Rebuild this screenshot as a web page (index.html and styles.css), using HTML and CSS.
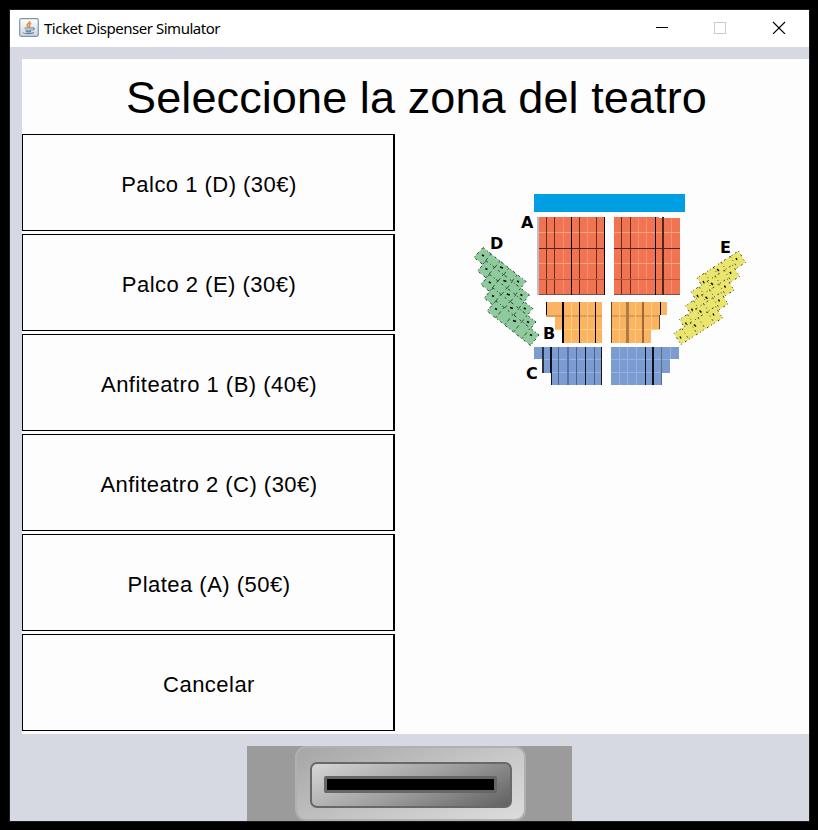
FILE: index.html
```
<!DOCTYPE html>
<html lang="es">
<head>
<meta charset="utf-8">
<title>Ticket Dispenser Simulator</title>
<link rel="stylesheet" href="styles.css">
</head>
<body>
<div class="window">
  <header class="titlebar">
    <svg class="app-icon" width="20" height="19" viewBox="0 0 20 19">
      <defs><linearGradient id="tile" x1="0" y1="0" x2="0" y2="1"><stop offset="0" stop-color="#fff"/><stop offset="1" stop-color="#cfd5db"/></linearGradient></defs>
      <rect x=".7" y=".7" width="18.6" height="17.6" rx="1.5" fill="url(#tile)" stroke="#7c95ac" stroke-width="1.2"/>
      <path d="M10.6 3c1 2-3 2.700-2.500 4.500.2.900 1 1.200 1.200 2M12.300 5.300c-1.700.8-2.700 1.700-1.600 2.800.5.600 0 1.100-.4 1.500" fill="none" stroke="#ec8a3a" stroke-width="1.500"/>
      <path d="M5.500 10h8M6.300 11.700c2 .7 4.500.7 6.500 0M6.800 13.400c1.600.6 3.600.6 5.300 0M13.500 10c2-.8 2.500 1.300-.2 2.300M4 14.500c1 1.500 9 1.500 11 0" fill="none" stroke="#6488a6" stroke-width="1.200"/>
    </svg>
    <span class="title">Ticket Dispenser Simulator</span>
    <svg class="controls" width="130" height="14" viewBox="0 0 130 14" shape-rendering="crispEdges">
      <path d="M0 7.500h12" stroke="#000"/>
      <rect x="58.500" y="2.500" width="11" height="11" fill="none" stroke="#ccc"/>
      <path d="M117 2l12 12M129 2L117 14" stroke="#000" stroke-width="1.100" shape-rendering="auto"/>
    </svg>
  </header>
  <main class="screen">
    <h1>Seleccione la zona del teatro</h1>
    <div class="content">
      <div class="options">
        <button>Palco 1 (D) (30€)</button>
        <button>Palco 2 (E) (30€)</button>
        <button>Anfiteatro 1 (B) (40€)</button>
        <button>Anfiteatro 2 (C) (30€)</button>
        <button>Platea (A) (50€)</button>
        <button>Cancelar</button>
      </div>
      <svg class="map" width="280" height="200" viewBox="470 190 280 200">
        <defs>
          <g id="row-d">
            <path d="M483 247.500L526 281.500 517.500 292 474 257.500z" fill="#8fca9c"/>
            <path d="M483 247.500L526 281.500 517.500 292 474 257.500z" fill="none" stroke="#1c3022" stroke-width=".9" stroke-dasharray="2 3 1 2 3 4"/>
            <path d="M491 254l-8 10M500 261l-8 10M509 268l-8 10M517 275l-8 10" stroke="#264a30" stroke-width=".9" stroke-dasharray="2 3 4 2"/>
            <path d="M482 255l2 1M500 267l3 1M517 281l2 1" stroke="#000" stroke-width="1.500"/>
          </g>
          <g id="row-e">
            <path d="M738.500 251L745.500 262.500 704 289 697 278z" fill="#e9e56f"/>
            <path d="M738.500 251L745.500 262.500 704 289 697 278z" fill="none" stroke="#353318" stroke-width=".9" stroke-dasharray="1 3 2 4 1 2"/>
            <path d="M730 256l7 11M721 262l7 11M713 267l7 11M705 273l7 11" stroke="#4c481d" stroke-width=".9" stroke-dasharray="2 3 1 3"/>
            <path d="M736 258l1 2M717 269l2 2M703 281l1 2" stroke="#15150b" stroke-width="1.500"/>
          </g>
        </defs>
        <g shape-rendering="crispEdges">
          <path d="M534 194h151v18H534z" fill="#009fe3"/>
          <path d="M537 217h2v78h-2z" fill="#bdbdc7"/>
          <path d="M539 217h66v78h-66zM614 217h24l42 1v77h-66z" fill="#f07352"/>
          <g stroke="#f8a184">
            <path d="M563.500 217v78M587.500 217v78M646.500 218v77M671.500 218v77M638.500 218v77" opacity=".6"/>
            <path d="M539 232.500h66M539 263.500h66M614 232.500h66M614 263.500h66"/>
          </g>
          <path d="M546.500 217v78M554.500 217v78M579.500 217v78M596.500 217v78M621.500 217v78M630.500 217v78" stroke="#652d20"/>
          <path d="M539 248.500h66M614 248.500h66" stroke="#5c2018"/>
          <path d="M539 279.500h66M614 279.500h66" stroke="#b85640"/>
          <path d="M539 294.500h66M614 294.500h66" stroke="#765650"/>
          <path d="M571.500 217v78M604.500 217v78M655.500 217v78" stroke="#000"/>
          <path d="M663 217v78" stroke="#4f281d" stroke-width="2"/>

          <path d="M546 302h56v41h-40v-14h-7v-13h-9zM611 302h56v13h-7v14h-9v14h-40z" fill="#fab462"/>
          <path d="M546 316h56M611 316h49" stroke="#d99d57" stroke-width="2"/>
          <path d="M571.500 302v41M587.500 302v41M619.500 302v41M635.500 302v41M651.500 302v27M555 329.500h47M611 329.500h49" stroke="#ffce78"/>
          <path d="M563 302v41" stroke="#000" stroke-width="2"/>
          <path d="M546.500 302v13M579.500 302v41M595.500 302v41M660.500 302v13" stroke="#000"/>
          <path d="M611.500 302v41M659.500 315v14" stroke="#654722"/>
          <path d="M627.500 302v41" stroke="#ad7d45" stroke-width="3"/>
          <path d="M643 302v41" stroke="#9c6938" stroke-width="2"/>

          <path d="M534 347h68v38h-51v-12h-9v-14h-8zM611 347h68v12h-9v14h-8v12h-51z" fill="#7b9bd1"/>
          <path d="M542 359.500h60M611 359.500h59M551 372.500h51M611 372.500h51M619.500 347v38M627.500 347v38M636.500 347v38M670.500 347v12" stroke="#91b3e6"/>
          <path d="M558.500 347v38M576.500 347v38M594.500 347v38" stroke="#4d618a"/>
          <path d="M568 347v38" stroke="#5a71a5" stroke-width="2"/>
          <path d="M543 347v26" stroke="#293044" stroke-width="2"/>
          <path d="M551 347v26M653 347v38" stroke="#10131e" stroke-width="2"/>
          <path d="M551.500 372v13M585.500 347v38M601.500 347v38M645.500 347v38" stroke="#111622"/>
          <path d="M661.500 347v38" stroke="#65677a"/>
        </g>
        <use href="#row-d"/><use href="#row-d" x="3.400" y="13.500"/><use href="#row-d" x="6.800" y="27"/><use href="#row-d" x="10" y="40.500"/><use href="#row-d" x="13" y="53.500"/>
        <use href="#row-e"/><use href="#row-e" x="-6" y="13.900"/><use href="#row-e" x="-11.500" y="27.700"/><use href="#row-e" x="-17.500" y="41.500"/><use href="#row-e" x="-23" y="55.500"/>
        <g class="labels">
          <text x="521" y="228">A</text>
          <text x="490" y="249">D</text>
          <text x="720" y="252.500">E</text>
          <text x="543" y="338.500">B</text>
          <text x="526" y="379">C</text>
        </g>
      </svg>
    </div>
  </main>
  <footer class="dispenser">
    <div class="bezel"><div class="mouth"><div class="slot"></div></div></div>
  </footer>
</div>
</body>
</html>
```
FILE: styles.css
```
* { box-sizing: border-box; }
body {
  margin: 0;
  height: 830px;
  padding: 9px 8px 8px 9px;
  background: #000;
  font-family: "Liberation Sans", Arial, sans-serif;
  color: #000;
  overflow: hidden;
}
.window {
  width: 801px;
  height: 813px;
  border: 1px solid #1c1c1c;
  background: #d6d9e1;
}
.titlebar {
  display: flex;
  align-items: center;
  height: 37px;
  padding: 0 23px 0 9px;
  background: #fff;
}
.app-icon { margin-top: -2px; }
.title {
  margin: -2px 0 0 5px;
  font: 15px "Noto Sans", sans-serif;
  letter-spacing: -0.47px;
  white-space: nowrap;
}
.controls { margin-left: auto; margin-top: -4px; }
.screen {
  height: 675px;
  margin: 12px 0 0 12px;
  background: #fdfdfd;
}
h1 {
  height: 75px;
  margin: 0;
  padding-left: 2px;
  font-size: 45px;
  font-weight: 400;
  line-height: 77px;
  letter-spacing: 0.1px;
  text-align: center;
  white-space: nowrap;
}
.content { display: flex; }
.options {
  display: grid;
  grid-auto-rows: 97px;
  gap: 3px;
  width: 373px;
}
button {
  padding: 4px 0 0 2px;
  border: 1px solid #000;
  border-right-width: 2px;
  border-radius: 0;
  background: #fdfdfd;
  font: 22px "Liberation Sans", Arial, sans-serif;
  letter-spacing: 0.48px;
  color: #000;
}
.map { margin: 56px 0 0 75px; }
.labels { font: bold 16px "DejaVu Sans", sans-serif; }
.dispenser {
  width: 325px;
  height: 75px;
  margin: 12px 0 0 237px;
  padding: 0 46px 0 48px;
  background: #9b9b9b;
}
.bezel {
  height: 75px;
  padding: 14px 12px 12px 13px;
  border: 2px solid #b0b0b0;
  border-radius: 11px;
  background: linear-gradient(155deg, #a6a6a6, #c3c3c3 50%, #dcdcdc);
}
.mouth {
  height: 46px;
  padding: 12px 13px 13px 12px;
  border: 2px solid #686868;
  border-radius: 7px;
  background: linear-gradient(155deg, #d6d6d6, #a0a0a0 50%, #616161);
}
.slot {
  height: 17px;
  border: 3px solid #666;
  border-radius: 2px;
  background: #000;
}
```
